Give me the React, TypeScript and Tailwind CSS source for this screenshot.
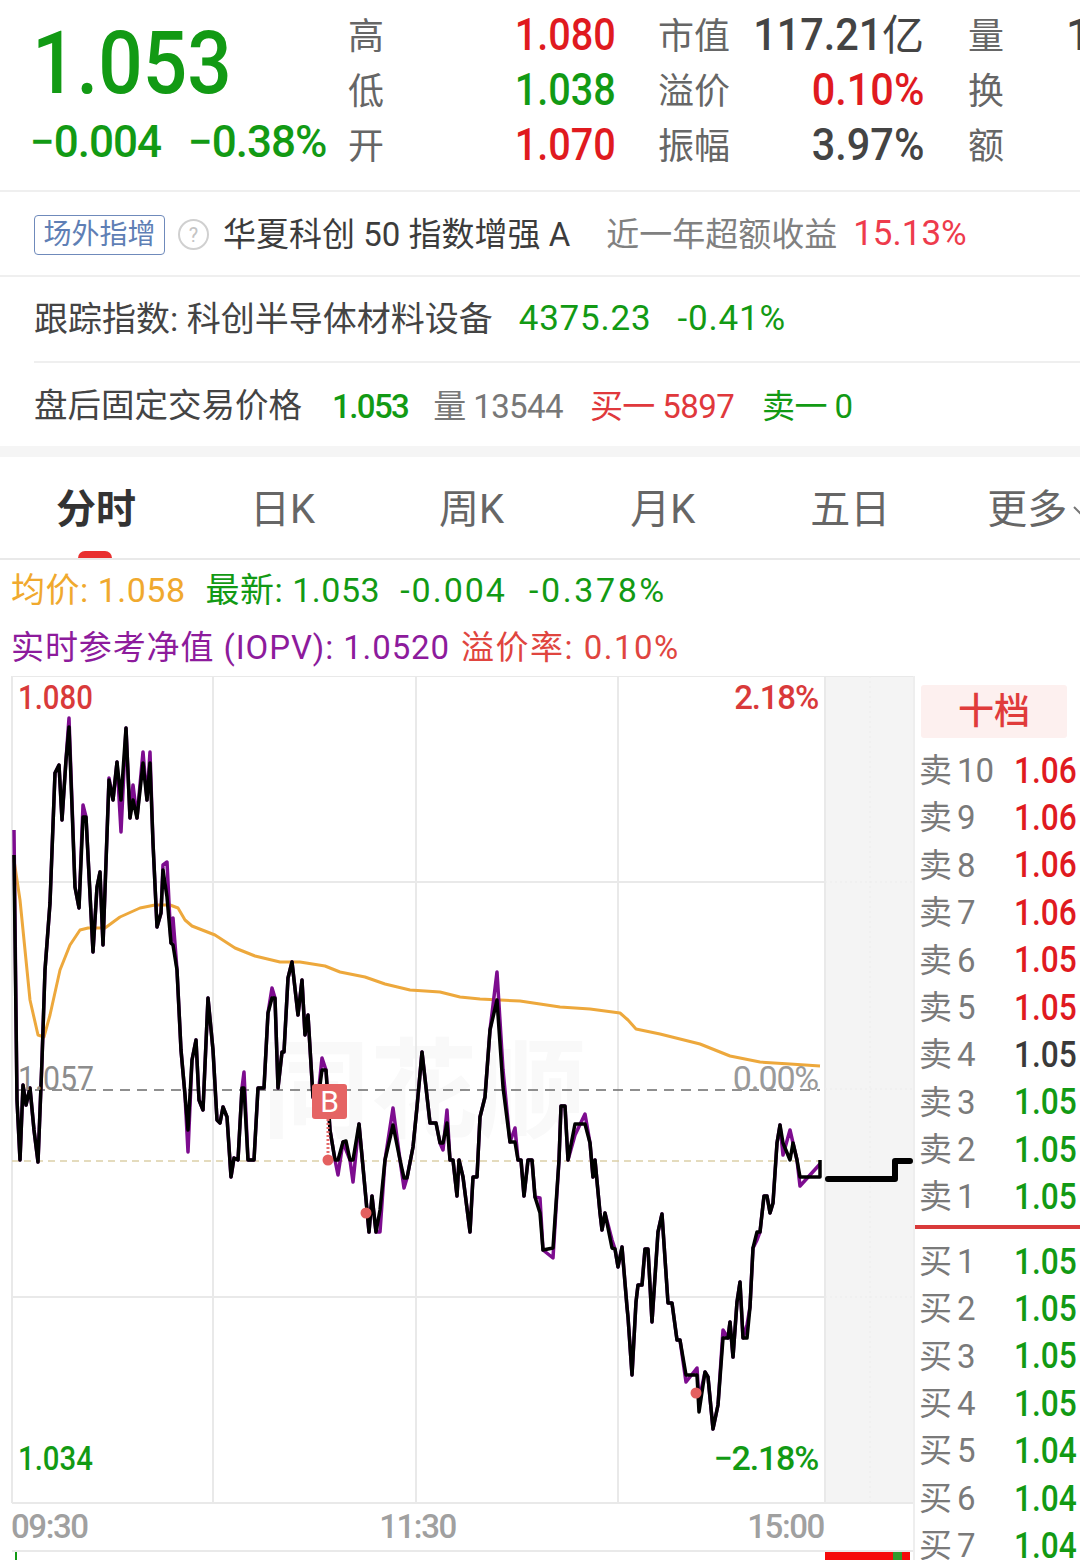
const RED = "text-[#e01a1f]";
const GREEN = "text-[#129a14]";

const STATS = [
  { a: "高", av: "1.080", ac: RED, b: "市值", bv: "117.21", bu: "亿", bc: "text-[#444]", c: "量", cv: "1" },
  { a: "低", av: "1.038", ac: GREEN, b: "溢价", bv: "0.10%", bu: "", bc: RED, c: "换", cv: "" },
  { a: "开", av: "1.070", ac: RED, b: "振幅", bv: "3.97%", bu: "", bc: "text-[#444]", c: "额", cv: "" },
];

const ASKS = [
  { l: "卖", n: "10", p: "1.06", c: RED },
  { l: "卖", n: "9", p: "1.06", c: RED },
  { l: "卖", n: "8", p: "1.06", c: RED },
  { l: "卖", n: "7", p: "1.06", c: RED },
  { l: "卖", n: "6", p: "1.05", c: RED },
  { l: "卖", n: "5", p: "1.05", c: RED },
  { l: "卖", n: "4", p: "1.05", c: "text-[#3a3a3a]" },
  { l: "卖", n: "3", p: "1.05", c: GREEN },
  { l: "卖", n: "2", p: "1.05", c: GREEN },
  { l: "卖", n: "1", p: "1.05", c: GREEN },
];

const BIDS = [
  { l: "买", n: "1", p: "1.05", c: GREEN },
  { l: "买", n: "2", p: "1.05", c: GREEN },
  { l: "买", n: "3", p: "1.05", c: GREEN },
  { l: "买", n: "4", p: "1.05", c: GREEN },
  { l: "买", n: "5", p: "1.04", c: GREEN },
  { l: "买", n: "6", p: "1.04", c: GREEN },
  { l: "买", n: "7", p: "1.04", c: GREEN },
];

// price line, traced in page px (x, y)
const PRICE: number[][] = [
  [14,855],[17,1100],[20,1160],[23,1085],[26,1105],[30,1088],[34,1130],[38,1162],[42,1060],[45,970],[50,903],[55,773],[59,765],[62,820],[66,760],[69,727],[75,887],[79,908],[83,817],[86,817],[93,952],[97,887],[100,872],[103,945],[109,780],[113,800],[117,762],[121,800],[126,728],[130,818],[133,800],[137,818],[143,763],[147,800],[150,763],[153,843],[157,927],[161,913],[163,870],[167,897],[171,943],[173,945],[177,970],[181,1050],[185,1095],[188,1130],[192,1060],[196,1040],[199,1100],[203,1110],[208,998],[213,1050],[217,1120],
  [220,1123],[223,1107],[227,1117],[231,1177],[234,1158],[238,1160],[242,1088],[244,1088],[248,1160],[254,1160],[258,1088],[264,1088],[268,1013],[272,998],[275,998],[278,1088],[282,1052],[284,1052],[288,978],[292,962],[298,1015],[302,980],[305,1035],[308,1015],[313,1097],[317,1107],[322,1070],[326,1070],[330,1130],[335,1160],[338,1160],[343,1142],[346,1141],[350,1160],[353,1160],[359,1124],[363,1167],[369,1232],[372,1196],[376,1232],[380,1210],[385,1160],[393,1125],[400,1160],[404,1178],[407,1178],[413,1147],[417,1107],[422,1052],[430,1123],[436,1123],[440,1143],[443,1143],[447,1123],[450,1160],[453,1160],[457,1196],[459,1160],[463,1177],[470,1232],[473,1177],[477,1177],[480,1117],[485,1097],[490,1030],[497,1000],[503,1087],[510,1142],[515,1142],[518,1160],[521,1160],[524,1196],[528,1160],[532,1160],[535,1197],[540,1213],[543,1250],[553,1248],[559,1160],[561,1106],[565,1106],[568,1160],[575,1124],[585,1124],[590,1143],[593,1177],[595,1160],[600,1213],[602,1230],[605,1213],[612,1248],[615,1249],[618,1267],[622,1247],[627,1307],[628,1317],[632,1375],[636,1302],[638,1285],[642,1285],[645,1249],[648,1249],[652,1322],[658,1232],[662,1214],[668,1303],[672,1303],[677,1340],[680,1340],[686,1375],[697,1375],[699,1412],[705,1372],[708,1377],[713,1429],[718,1405],[723,1338],[728,1338],[730,1322],[733,1357],[737,1302],[740,1282],[743,1338],[747,1338],[750,1307],[753,1248],[757,1232],[760,1232],[764,1196],[767,1196],[770,1213],[773,1203],[777,1143],[780,1125],[783,1143],[790,1160],[793,1143],[797,1160],[800,1177],[820,1177],[820,1160],
];

// where the IOPV line leaves the price line
const IOPV_Y: Record<number, number> = {
  14: 830, 69: 718, 83: 805, 109: 778, 121: 832, 133: 785, 143: 752, 150: 752, 163: 865, 167: 862, 173: 918, 188: 1152, 244: 1072, 272: 988, 322: 1058, 338: 1175, 346: 1150, 353: 1182, 380: 1232, 393: 1108, 404: 1188, 443: 1150, 447: 1110, 497: 972, 503: 1070, 515: 1128, 540: 1198, 553: 1258, 575: 1135, 585: 1114, 612: 1240, 686: 1382, 697: 1368, 699: 1400, 723: 1330, 747: 1325, 757: 1240, 783: 1155, 790: 1130, 800: 1186, 810: 1166, 820: 1164,
};

const AVG =
  "14,860 20,900 30,1000 38,1035 44,1037 50,1015 60,970 70,945 80,930 88,928 105,928 120,917 140,908 155,905 170,905 178,908 185,920 192,926 215,935 235,948 255,956 280,962 300,962 325,966 340,972 365,977 385,984 410,990 440,992 460,997 480,999 520,1001 560,1007 590,1009 620,1013 628,1020 636,1029 660,1034 700,1044 730,1056 760,1062 790,1064 820,1066";

const pricePts = PRICE.map((p) => p.join(",")).join(" ");
const iopvPts = PRICE.map((p) => `${p[0]},${IOPV_Y[p[0]] ?? p[1]}`).join(" ");

function BookRow({ l, n, p, c }: { l: string; n: string; p: string; c: string }) {
  return (
    <div className="flex h-[47.4px] items-center whitespace-nowrap pl-[4px]">
      <span className="flex w-[95px] shrink-0 items-center gap-[5px] text-[33px] text-[#7a7a7a]">
        <span>{l}</span>
        <span>{n}</span>
      </span>
      <span className={`shrink-0 origin-left scale-x-[0.88] text-[36px] font-medium ${c}`}>{p}</span>
    </div>
  );
}

function Chart() {
  return (
    <div className="relative h-[828px] w-[913px]">
      <span className="absolute left-[262px] top-[362px] text-[108px] font-bold leading-none text-[#f9f9f9]">同花顺</span>
      <svg width="913" height="828" viewBox="0 676 913 828" className="relative block">
        <rect x="825" y="676" width="88" height="828" fill="#f4f4f4" />
        <g stroke="#e9e9e9" strokeWidth="2" fill="none">
          <path d="M12 676V1503M213 676V1503M416 676V1503M618 676V1503M825 676V1503" />
          <path d="M12 676H913M12 882H825M12 1297H825M12 1503H913" />
        </g>
        <path d="M825 882H913M825 1089H913M825 1297H913M870 676V1503" stroke="#ececec" strokeWidth="1" strokeDasharray="2 3" fill="none" />
        <path d="M18 1090H820" stroke="#6b6b6b" strokeWidth="1.3" strokeDasharray="10 7" fill="none" />
        <path d="M12 1161H820" stroke="#dccfa8" strokeWidth="1.3" strokeDasharray="7 5" fill="none" />
        <polyline points={AVG} fill="none" stroke="#eda83c" strokeWidth="3" strokeLinejoin="round" />
        <polyline points={iopvPts} fill="none" stroke="#7d0c8f" strokeWidth="3.5" strokeLinejoin="round" />
        <polyline points={pricePts} fill="none" stroke="#000" strokeWidth="3.5" strokeLinejoin="round" />
        <path d="M328 1115V1158" stroke="#e46a6a" strokeWidth="3" strokeDasharray="2 2" />
        <circle cx="328" cy="1160" r="5.5" fill="#e4605f" />
        <circle cx="366" cy="1213" r="5.5" fill="#e4605f" />
        <circle cx="696" cy="1393" r="5.5" fill="#e4605f" />
        <path d="M828 1179H895V1161H910" fill="none" stroke="#000" strokeWidth="6" strokeLinecap="round" strokeLinejoin="round" />
      </svg>

      <span className="absolute left-[312px] top-[408px] flex h-[35px] w-[35px] items-center justify-center rounded-[3px] bg-[#e56464] text-[30px] leading-none text-white">B</span>

      <span className="absolute left-[18px] top-[-3px] origin-left scale-x-[0.89] text-[33px] font-medium text-[#d93a3a]">1.080</span>
      <span className="absolute right-[95px] top-[-3px] text-[33px] font-medium tracking-[-1.2px] text-[#d93a3a]">2.18%</span>
      <span className="absolute left-[18px] top-[377px] origin-left scale-x-[0.89] text-[34px] text-[#8d8d8d]">1.057</span>
      <span className="absolute right-[95px] top-[377px] text-[34px] tracking-[-1.2px] text-[#9a9a9a]">0.00%</span>
      <span className="absolute left-[18px] top-[758px] origin-left scale-x-[0.89] text-[33px] font-medium text-[#129a14]">1.034</span>
      <span className="absolute right-[95px] top-[757px] text-[34px] font-medium tracking-[-1.2px] text-[#129a14]">−2.18%</span>
    </div>
  );
}

export default function App() {
  return (
    <div className="h-[1560px] w-[1080px] overflow-hidden whitespace-nowrap bg-white font-['Roboto','Noto_Sans_CJK_SC',sans-serif]">
      {/* quote header */}
      <div className="flex h-[192px] border-b-2 border-[#efefef]">
        <div className={`w-[348px] shrink-0 pl-[30px] ${GREEN}`}>
          <div className="ml-[2px] mt-[11px] origin-left scale-x-[0.89] text-[88px] font-medium leading-[104px]">1.053</div>
          <div className="mt-[2px] flex gap-[27px] text-[44px] font-medium leading-[50px] tracking-[-1px]">
            <span>−0.004</span>
            <span>−0.38%</span>
          </div>
        </div>
        <div className="flex shrink-0 flex-col pt-[9px]">
          {STATS.map((s) => (
            <div key={s.a} className="flex h-[55px] items-center text-[36px] text-[#666]">
              <div className="flex w-[268px] items-center justify-between">
                <span>{s.a}</span>
                <span className={`origin-right scale-x-[0.88] pb-[3px] text-[45px] font-medium ${s.ac}`}>{s.av}</span>
              </div>
              <div className="ml-[42px] flex w-[266px] items-center justify-between">
                <span>{s.b}</span>
                <span className={`flex items-center pb-[3px] ${s.bc}`}>
                  <span className="origin-right scale-x-[0.92] text-[45px] font-medium">{s.bv}</span>
                  {s.bu && <span className="text-[42px]">{s.bu}</span>}
                </span>
              </div>
              <span className="ml-[44px]">{s.c}</span>
              <span className="ml-[62px] pb-[3px] text-[45px] font-medium text-[#444]">{s.cv}</span>
            </div>
          ))}
        </div>
      </div>

      {/* fund row */}
      <div className="flex h-[85px] items-center border-b-2 border-[#efefef] pl-[34px] pt-[2px]">
        <span className="flex h-[40px] w-[131px] items-center justify-center rounded-[4px] border border-[#6f8abb] text-[28px] text-[#5f7fb5]">场外指增</span>
        <span className="ml-[13px] flex h-[31px] w-[31px] items-center justify-center rounded-full border-2 border-[#d0d0d0] text-[20px] text-[#c4c4c4]">?</span>
        <span className="ml-[14px] text-[33px] text-[#3c3c3c]">华夏科创 50 指数增强 A</span>
        <span className="ml-[36px] text-[33px] text-[#808080]">近一年超额收益</span>
        <span className="ml-[16px] text-[35px] text-[#ee3b4c]">15.13%</span>
      </div>

      {/* tracked index */}
      <div className="flex h-[84px] items-center text-[34px]">
        <span className="ml-[34px] text-[#444]">跟踪指数: 科创半导体材料设备</span>
        <span className={`ml-[26px] text-[35px] tracking-[0.8px] ${GREEN}`}>4375.23</span>
        <span className={`ml-[26px] text-[35px] tracking-[0.8px] ${GREEN}`}>-0.41%</span>
      </div>

      {/* after-hours */}
      <div className="ml-[34px] flex h-[85px] items-center border-t-2 border-[#efefef] pt-[4px]">
        <span className="text-[33.5px] text-[#444]">盘后固定交易价格</span>
        <span className={`ml-[30px] text-[33px] font-medium tracking-[-1.6px] ${GREEN}`}>1.053</span>
        <span className="ml-[25px] text-[33px] tracking-[-0.6px] text-[#777]">量 13544</span>
        <span className="ml-[27px] text-[33px] tracking-[-0.6px] text-[#e0383c]">买一 5897</span>
        <span className={`ml-[28px] text-[33px] tracking-[-0.6px] ${GREEN}`}>卖一 0</span>
      </div>

      <div className="h-[11px] bg-[#f5f5f5]" />

      {/* period tabs */}
      <div className="relative flex h-[103px] items-center border-b-2 border-[#e9e9e9] pt-[4px] text-[40px] text-[#666]">
        <span className="ml-[56px] font-bold text-[#333]">分时</span>
        <span className="ml-[114px]">日K</span>
        <span className="ml-[124px]">周K</span>
        <span className="ml-[126px]">月K</span>
        <span className="ml-[115px]">五日</span>
        <span className="ml-[97px]">更多</span>
        <svg width="14" height="10" viewBox="0 0 14 10" className="ml-[6px] shrink-0">
          <path d="M1 2l6 6 6-6" fill="none" stroke="#777" strokeWidth="2" />
        </svg>
        <span className="absolute left-[78px] top-[94px] h-[7px] w-[34px] rounded-t-full bg-[#e93030]" />
      </div>

      {/* chart legend */}
      <div className="flex h-[58px] items-center pl-[11px] pt-[2px] text-[34px]">
        <span className="tracking-[0.5px] text-[#f0a92e]">均价: 1.058</span>
        <span className={`ml-[20px] tracking-[0.5px] ${GREEN}`}>最新: 1.053</span>
        <span className={`ml-[20px] tracking-[2px] ${GREEN}`}>-0.004</span>
        <span className={`ml-[22px] tracking-[2.6px] ${GREEN}`}>-0.378%</span>
      </div>
      <div className="flex h-[58px] items-center pl-[11px] pt-[1px] text-[33px]">
        <span className="tracking-[0.9px] text-[#8d1b9c]">实时参考净值 (IOPV): 1.0520</span>
        <span className="ml-[11px] tracking-[1.5px] text-[#e0453f]">溢价率: 0.10%</span>
      </div>

      <div className="flex">
        <div className="w-[913px] shrink-0">
          <Chart />
          <div className="flex h-[46px] items-center justify-between pl-[11px] pr-[89px] text-[33px] font-medium tracking-[-1.4px] text-[#a0a0a0]">
            <span>09:30</span>
            <span>11:30</span>
            <span>15:00</span>
          </div>
          <div className="ml-[12px] flex h-[10px] border-t-2 border-[#e9e9e9]">
            <span className="ml-[3px] h-full w-[2px] bg-[#129a14]" />
            <span className="ml-[808px] h-full w-[68px] bg-[#f50a0a]" />
            <span className="h-full w-[9px] bg-[#2f9a2b]" />
            <span className="h-full w-[8px] bg-[#f50a0a]" />
          </div>
        </div>

        {/* order book */}
        <div className="w-[167px] shrink-0 border-l-2 border-[#eeeeee] pt-[9px]">
          <div className="ml-[6px] flex h-[53px] w-[146px] items-center justify-center rounded-[3px] bg-[#fdf0ef] text-[36px] font-medium text-[#e03b3b]">十档</div>
          <div className="mt-[9px]">
            {ASKS.map((r) => (
              <BookRow key={r.l + r.n} {...r} />
            ))}
          </div>
          <div className="mt-[4px] h-[4px] bg-[#d93a3a]" />
          <div className="mt-[9px]">
            {BIDS.map((r) => (
              <BookRow key={r.l + r.n} {...r} />
            ))}
          </div>
        </div>
      </div>
    </div>
  );
}
